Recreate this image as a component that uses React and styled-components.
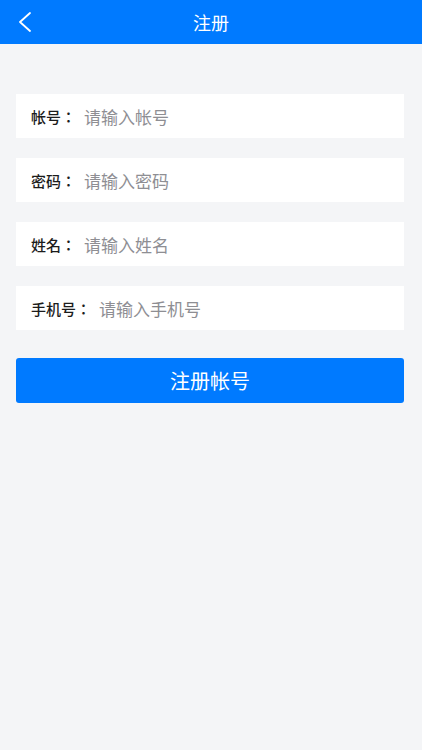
import styled, { createGlobalStyle } from "styled-components";

const GlobalStyle = createGlobalStyle`
  body {
    margin: 0;
    background: #f4f5f7;
    font-family: "Noto Sans CJK SC", "Noto Sans", sans-serif;
  }
`;

const fields = [
    { label: "帐号：", placeholder: "请输入帐号" },
    { label: "密码：", placeholder: "请输入密码" },
    { label: "姓名：", placeholder: "请输入姓名" },
    { label: "手机号：", placeholder: "请输入手机号" },
];

function App() {
    return (
        <Page>
            <GlobalStyle />
            <Header>
                <Back>
                    <svg width="14" height="20" viewBox="0 0 14 20">
                        <path d="M12 1 L2 10 L12 19" fill="none" stroke="#fff" strokeWidth="1.8" strokeLinecap="round" strokeLinejoin="round" />
                    </svg>
                </Back>
                <Title>注册</Title>
            </Header>
            <Form>
                {fields.map(f => (
                    <Row key={f.label}>
                        <Label>{f.label}</Label>
                        <Input placeholder={f.placeholder} />
                    </Row>
                ))}
                <Submit>注册帐号</Submit>
            </Form>
        </Page>
    );
}
export default App;

const Page = styled.div`
  min-height: 750px;
  background: #f4f5f7;
`;

const Header = styled.div`
  height: 44px;
  background: #007aff;
  display: flex;
  align-items: center;
  justify-content: center;
  position: relative;
`;

const Back = styled.div`
  position: absolute;
  left: 18px;
  top: 12px;
  display: flex;
`;

const Title = styled.div`
  color: #fff;
  font-size: 18px;
  line-height: 44px;
`;

const Form = styled.div`
  padding: 50px 18px 0 16px;
  display: flex;
  flex-direction: column;
  gap: 20px;
`;

const Row = styled.div`
  height: 44px;
  background: #fff;
  display: flex;
  align-items: center;
  padding-left: 15px;
  gap: 8px;
`;

const Label = styled.span`
  font-family: "Noto Sans CJK TC", "Noto Sans CJK SC", sans-serif;
  font-size: 15px;
  font-weight: 500;
  color: #1c1c1c;
  white-space: nowrap;
`;

const Input = styled.input`
  flex: 1;
  border: none;
  outline: none;
  background: transparent;
  font-family: inherit;
  font-size: 17px;
  color: #333;
  padding: 0;
  &::placeholder {
    color: #8e8e93;
  }
`;

const Submit = styled.button`
  margin-top: 8px;
  height: 45px;
  border: none;
  border-radius: 3px;
  background: #007aff;
  color: #fff;
  font-family: inherit;
  font-size: 20px;
  cursor: pointer;
`;
